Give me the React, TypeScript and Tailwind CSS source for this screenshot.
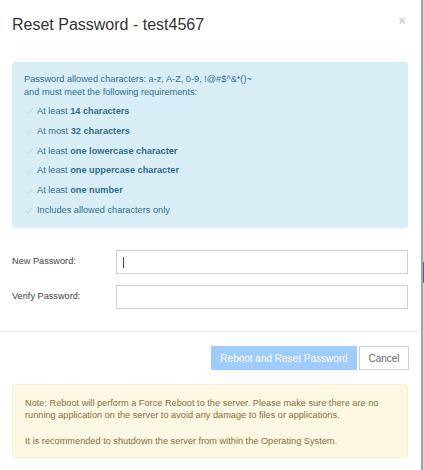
import React from "react";

const rules: { pre: string; bold: string }[] = [
  { pre: "At least ", bold: "14 characters" },
  { pre: "At most ", bold: "32 characters" },
  { pre: "At least ", bold: "one lowercase character" },
  { pre: "At least ", bold: "one uppercase character" },
  { pre: "At least ", bold: "one number" },
  { pre: "Includes allowed characters only", bold: "" },
];

const Check = () => (
  <svg width="8" height="7" viewBox="0 0 8 7" className="shrink-0">
    <path d="M0.8 3.8 L3 6 L7.2 1" fill="none" stroke="#c3dde9" strokeWidth="1.1" />
  </svg>
);

export default function App() {
  return (
    <div
      className="flex w-[424px] h-[470px] overflow-hidden bg-[#d6d6d6]"
      style={{ fontFamily: '"Liberation Sans", Arial, sans-serif' }}
    >
      <div className="w-[423px] h-full shrink-0 bg-white border-r-2 border-[#a3a3a3]">
        {/* Header */}
        <div className="flex items-start justify-between pl-3 pr-[15px] pt-[16px] h-[62px]">
          <h2 className="text-[16px] leading-[18px] text-[#333]">Reset Password - test4567</h2>
          <span className="text-[13px] leading-none font-bold text-[#cfcfcf] mt-[-2px]">×</span>
        </div>

        {/* Requirements */}
        <div className="mx-3 w-[396px] h-[166px] rounded-[3px] bg-[#d9edf7] text-[#31708f] text-[9.2px] px-3 pt-[11px]">
          <p className="leading-[13px]">
            Password allowed characters: a-z, A-Z, 0-9, !@#$^&amp;*()~
            <br />
            and must meet the following requirements:
          </p>
          <ul className="mt-[3px]">
            {rules.map((r, i) => (
              <li key={i} className="flex items-center gap-[4px] h-[19.8px] pl-[1px]">
                <Check />
                <span>
                  {r.pre}
                  {r.bold && <b className="font-bold">{r.bold}</b>}
                </span>
              </li>
            ))}
          </ul>
        </div>

        {/* Form */}
        <div className="px-3 pt-[22px] flex flex-col gap-[11px] text-[9.2px] text-[#444]">
          <div className="flex items-center">
            <label className="w-[104px]">New Password:</label>
            <div className="w-[292px] h-[24px] border border-[#d0d0d0] flex items-center pl-[6px]">
              <span className="w-px h-[11px] bg-[#444]" />
            </div>
          </div>
          <div className="flex items-center">
            <label className="w-[104px]">Verify Password:</label>
            <div className="w-[292px] h-[24px] border border-[#d0d0d0]" />
          </div>
        </div>

        <div className="mt-[22px] border-t border-[#ececec]" />

        {/* Footer */}
        <div className="flex justify-end gap-[2px] pr-[12px] pt-[14px]">
          <button className="w-[146px] h-[24px] bg-[#9fcbfd] text-white text-[10px]">
            Reboot and Reset Password
          </button>
          <button className="w-[50px] h-[24px] border border-[#d0d0d0] bg-white text-[#666] text-[10px]">
            Cancel
          </button>
        </div>

        <div className="mx-3 mt-[14px] w-[396px] h-[74px] rounded-[3px] bg-[#fcf8e3] border border-[#faf0d4] text-[#8a6d3b] text-[9.2px] leading-[12px] px-3 pt-[12px]">
          <p>
            Note: Reboot will perform a Force Reboot to the server. Please make sure there are no running
            application on the server to avoid any damage to files or applications.
          </p>
          <p className="mt-[14px]">It is recommended to shutdown the server from within the Operating System.</p>
        </div>
      </div>
      <div className="flex-1 flex flex-col">
        <div className="h-[262px]" />
        <div className="h-[21px] bg-[#3a6ea5]" />
      </div>
    </div>
  );
}
